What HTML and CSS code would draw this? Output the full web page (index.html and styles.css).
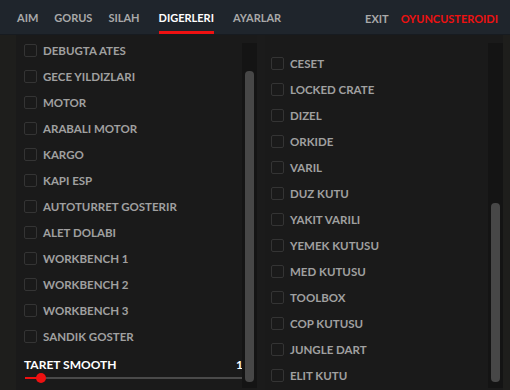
FILE: index.html
```html
<!DOCTYPE html>
<html lang="en">
<head>
    <meta charset="UTF-8">
    <title>Menu</title>
    <link rel="stylesheet" href="styles.css">
</head>
<body>
    <div class="topbar">
        <div class="tabs">
            <span class="tab">AIM</span>
            <span class="tab">GORUS</span>
            <span class="tab">SILAH</span>
            <span class="tab active">DIGERLERI</span>
            <span class="tab">AYARLAR</span>
        </div>
        <div class="right">
            <span class="exit">EXIT</span>
            <span class="user">OYUNCUSTEROIDI</span>
        </div>
    </div>
    <div class="main">
        <div class="panel left">
            <div class="content">
                <div class="list">
                    <div class="row"><span class="box"></span>DEBUGTA ATES</div>
                    <div class="row"><span class="box"></span>GECE YILDIZLARI</div>
                    <div class="row"><span class="box"></span>MOTOR</div>
                    <div class="row"><span class="box"></span>ARABALI MOTOR</div>
                    <div class="row"><span class="box"></span>KARGO</div>
                    <div class="row"><span class="box"></span>KAPI ESP</div>
                    <div class="row"><span class="box"></span>AUTOTURRET GOSTERIR</div>
                    <div class="row"><span class="box"></span>ALET DOLABI</div>
                    <div class="row"><span class="box"></span>WORKBENCH 1</div>
                    <div class="row"><span class="box"></span>WORKBENCH 2</div>
                    <div class="row"><span class="box"></span>WORKBENCH 3</div>
                    <div class="row"><span class="box"></span>SANDIK GOSTER</div>
                </div>
                <div class="slider">
                    <div class="slider-head">
                        <span>TARET SMOOTH</span>
                        <span class="value">12</span>
                    </div>
                    <div class="track">
                        <div class="fill" style="width:16px"></div>
                        <div class="knob"></div>
                    </div>
                </div>
            </div>
            <div class="scroll"><div class="thumb thumb-left"></div></div>
        </div>
        <div class="panel rightpanel">
            <div class="content">
                <div class="list">
                    <div class="row"><span class="box"></span>CESET</div>
                    <div class="row"><span class="box"></span>LOCKED CRATE</div>
                    <div class="row"><span class="box"></span>DIZEL</div>
                    <div class="row"><span class="box"></span>ORKIDE</div>
                    <div class="row"><span class="box"></span>VARIL</div>
                    <div class="row"><span class="box"></span>DUZ KUTU</div>
                    <div class="row"><span class="box"></span>YAKIT VARILI</div>
                    <div class="row"><span class="box"></span>YEMEK KUTUSU</div>
                    <div class="row"><span class="box"></span>MED KUTUSU</div>
                    <div class="row"><span class="box"></span>TOOLBOX</div>
                    <div class="row"><span class="box"></span>COP KUTUSU</div>
                    <div class="row"><span class="box"></span>JUNGLE DART</div>
                    <div class="row"><span class="box"></span>ELIT KUTU</div>
                </div>
            </div>
            <div class="scroll"><div class="thumb thumb-right"></div></div>
        </div>
    </div>
</body>
</html>
```

FILE: styles.css
```css
*{
    box-sizing: border-box;
    font-family: Lato, "Open Sans", sans-serif;
}
body{
    margin: 0;
    width: 510px;
    height: 390px;
    overflow: hidden;
    background-color: #1c1c1b;
}

.topbar{
    height: 35px;
    background-color: #1f252c;
    border-bottom: 1px solid #171b20;
    display: flex;
    align-items: center;
    justify-content: space-between;
    padding: 0 12px 0 17px;
    font-weight: 700;
    font-size: 11px;
}
.tabs{
    display: flex;
    gap: 16px;
    height: 100%;
}
.tab{
    color: #a9a9a9;
    display: flex;
    align-items: center;
    padding-top: 3px;
    border-bottom: 3px solid transparent;
}
.tab.active{
    color: #ffffff;
    border-bottom-color: #ee1111;
    margin: 0 3px;
}
.right{
    display: flex;
    gap: 12px;
    padding-top: 2px;
}
.exit{
    color: #a9a9a9;
}
.user{
    color: #ee1111;
}

.main{
    display: flex;
    height: 355px;
    padding-left: 16px;
    background-color: #1e1e1c;
}
.panel{
    display: flex;
    background-color: #1a1a1a;
    height: 100%;
    overflow: hidden;
}
.left{
    width: 249px;
    border-right: 8px solid #1b1b1b;
}
.rightpanel{
    width: 238px;
}
.content{
    flex: 1;
    overflow: hidden;
}
.left .content{
    padding: 2px 0 0 8px;
}
.rightpanel .content{
    padding: 15px 0 0 6px;
}

.row{
    height: 26px;
    display: flex;
    align-items: center;
    gap: 6px;
    color: #a0a0a0;
    font-weight: 700;
    font-size: 11.5px;
    white-space: nowrap;
}
.box{
    width: 13px;
    height: 13px;
    border: 1px solid #343434;
    border-radius: 2px;
    flex-shrink: 0;
}

.slider{
    padding-top: 8px;
    width: 226px;
}
.slider-head{
    display: flex;
    justify-content: space-between;
    color: #ffffff;
    font-weight: 700;
    font-size: 12px;
    white-space: nowrap;
}
.track{
    position: relative;
    height: 2px;
    background-color: #4a4a4a;
    margin: 5px 0 0 1px;
}
.fill{
    height: 100%;
    background-color: #ee1111;
}
.knob{
    position: absolute;
    left: 11px;
    top: -4px;
    width: 10px;
    height: 10px;
    border-radius: 50%;
    background-color: #ee1111;
}

.scroll{
    width: 15px;
    margin-top: 8px;
    margin-bottom: 2px;
    background-color: #141414;
    padding: 0 3px;
}
.thumb{
    background-color: #474747;
    border-radius: 4px;
}
.thumb-left{
    margin-top: 28px;
    height: 311px;
}
.thumb-right{
    margin-top: 160px;
    height: 179px;
}
```
